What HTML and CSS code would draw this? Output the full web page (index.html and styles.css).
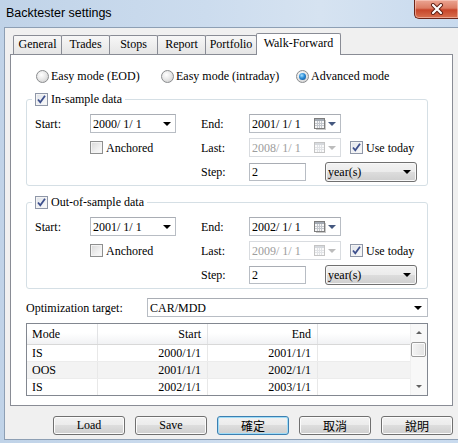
FILE: index.html
```html
<!DOCTYPE html>
<html lang="en">
<head>
    <meta charset="UTF-8">
    <title>Backtester settings</title>
    <link rel="stylesheet" href="styles.css">
</head>
<body>
<div class="window">

    <!-- Title bar -->
    <div class="titlebar">
        <span class="title">Backtester settings</span>
        <div class="close-btn">
            <svg width="16" height="12" viewBox="0 0 16 12">
                <path d="M4 2 L12 10 M12 2 L4 10" stroke="#5e1d12" stroke-width="4" stroke-linecap="round"/>
                <path d="M4 2 L12 10 M12 2 L4 10" stroke="#fff" stroke-width="2.2" stroke-linecap="round"/>
            </svg>
        </div>
    </div>

    <div class="client">
        <!-- Tabs -->
        <div class="tabs">
            <div class="tab w49">General</div>
            <div class="tab w49">Trades</div>
            <div class="tab w49">Stops</div>
            <div class="tab w49">Report</div>
            <div class="tab w52">Portfolio</div>
            <div class="tab active">Walk-Forward</div>
        </div>

        <div class="pane">
            <div class="modes">
                <label class="opt"><span class="radio"></span>Easy mode (EOD)</label>
                <label class="opt"><span class="radio"></span>Easy mode (intraday)</label>
                <label class="opt"><span class="radio on"></span>Advanced mode</label>
            </div>

            <!-- In-sample -->
            <fieldset class="group">
                <legend><span class="check on"><svg width="11" height="11" viewBox="0 0 11 11"><path d="M2 5.5 L4.3 8.3 L9 1.8" fill="none" stroke="#3d4f8c" stroke-width="1.8"/></svg></span>In-sample data</legend>
                <div class="fields">
                    <span>Start:</span>
                    <div class="combo"><span>2000/ 1/ 1</span><span class="tri"></span></div>
                    <span class="c4">End:</span>
                    <div class="picker"><span class="val">2001/ 1/ 1</span><svg class="cal" width="12" height="12" viewBox="0 0 12 12"><rect x="0.5" y="0.5" width="10" height="10" fill="#f6f6f6" stroke="#7d7d7d"/><rect x="1" y="1" width="9" height="2" fill="#a3aab3"/><path d="M1 5.5h9M1 7.5h9M3.5 3v7M5.5 3v7M7.5 3v7" stroke="#c3c7cd"/><path d="M11.5 2v10M2 11.5h10" stroke="#c9c9c9"/></svg><span class="tri blue"></span></div>

                    <label class="opt c2 gap3"><span class="check"></span>Anchored</label>
                    <span class="c4">Last:</span>
                    <div class="line">
                        <div class="picker off"><span class="val">2008/ 1/ 1</span><svg class="cal" width="12" height="12" viewBox="0 0 12 12"><rect x="0.5" y="0.5" width="10" height="10" fill="#fafafa" stroke="#c4c4c4"/><rect x="1" y="1" width="9" height="2" fill="#d6d9dd"/><path d="M1 5.5h9M1 7.5h9M3.5 3v7M5.5 3v7M7.5 3v7" stroke="#e1e3e6"/></svg><span class="tri grey"></span></div>
                        <label class="opt gap3 today"><span class="check on"><svg width="11" height="11" viewBox="0 0 11 11"><path d="M2 5.5 L4.3 8.3 L9 1.8" fill="none" stroke="#3d4f8c" stroke-width="1.8"/></svg></span>Use today</label>
                    </div>

                    <span class="c4">Step:</span>
                    <div class="line">
                        <div class="input">2</div>
                        <div class="select"><span>year(s)</span><span class="tri"></span></div>
                    </div>
                </div>
            </fieldset>

            <!-- Out-of-sample -->
            <fieldset class="group">
                <legend><span class="check on"><svg width="11" height="11" viewBox="0 0 11 11"><path d="M2 5.5 L4.3 8.3 L9 1.8" fill="none" stroke="#3d4f8c" stroke-width="1.8"/></svg></span>Out-of-sample data</legend>
                <div class="fields">
                    <span>Start:</span>
                    <div class="combo"><span>2001/ 1/ 1</span><span class="tri"></span></div>
                    <span class="c4">End:</span>
                    <div class="picker"><span class="val">2002/ 1/ 1</span><svg class="cal" width="12" height="12" viewBox="0 0 12 12"><rect x="0.5" y="0.5" width="10" height="10" fill="#f6f6f6" stroke="#7d7d7d"/><rect x="1" y="1" width="9" height="2" fill="#a3aab3"/><path d="M1 5.5h9M1 7.5h9M3.5 3v7M5.5 3v7M7.5 3v7" stroke="#c3c7cd"/><path d="M11.5 2v10M2 11.5h10" stroke="#c9c9c9"/></svg><span class="tri blue"></span></div>

                    <label class="opt c2 gap3"><span class="check"></span>Anchored</label>
                    <span class="c4">Last:</span>
                    <div class="line">
                        <div class="picker off"><span class="val">2009/ 1/ 1</span><svg class="cal" width="12" height="12" viewBox="0 0 12 12"><rect x="0.5" y="0.5" width="10" height="10" fill="#fafafa" stroke="#c4c4c4"/><rect x="1" y="1" width="9" height="2" fill="#d6d9dd"/><path d="M1 5.5h9M1 7.5h9M3.5 3v7M5.5 3v7M7.5 3v7" stroke="#e1e3e6"/></svg><span class="tri grey"></span></div>
                        <label class="opt gap3 today"><span class="check on"><svg width="11" height="11" viewBox="0 0 11 11"><path d="M2 5.5 L4.3 8.3 L9 1.8" fill="none" stroke="#3d4f8c" stroke-width="1.8"/></svg></span>Use today</label>
                    </div>

                    <span class="c4">Step:</span>
                    <div class="line">
                        <div class="input">2</div>
                        <div class="select"><span>year(s)</span><span class="tri"></span></div>
                    </div>
                </div>
            </fieldset>

            <!-- Optimization target -->
            <div class="target">
                <span class="target-label">Optimization target:</span>
                <div class="combo wide"><span>CAR/MDD</span><span class="tri"></span></div>
            </div>

            <!-- Walk-forward periods -->
            <div class="table">
                <div class="list">
                    <div class="row head">
                        <span>Mode</span><span class="num">Start</span><span class="num">End</span><span></span>
                    </div>
                    <div class="row">
                        <span>IS</span><span class="num">2000/1/1</span><span class="num">2001/1/1</span><span></span>
                    </div>
                    <div class="row alt">
                        <span>OOS</span><span class="num">2001/1/1</span><span class="num">2002/1/1</span><span></span>
                    </div>
                    <div class="row">
                        <span>IS</span><span class="num">2002/1/1</span><span class="num">2003/1/1</span><span></span>
                    </div>
                </div>
                <div class="scroll">
                    <div class="sbtn"><span class="tri up"></span></div>
                    <div class="thumb"></div>
                    <div class="track"></div>
                    <div class="sbtn"><span class="tri small"></span></div>
                </div>
            </div>
        </div>

        <!-- Dialog buttons -->
        <div class="actions">
            <div class="btn">Load</div>
            <div class="btn">Save</div>
            <div class="btn cjk focus">確定</div>
            <div class="btn cjk">取消</div>
            <div class="btn cjk">說明</div>
        </div>
    </div>
</div>
</body>
</html>
```

FILE: styles.css
```css
* {
    box-sizing: border-box;
}

body {
    margin: 0;
    font-family: "Liberation Serif", "Times New Roman", "DejaVu Serif", serif;
    font-size: 12px;
    line-height: 14px;
    color: #000;
}

.window {
    width: 458px;
    height: 443px;
    display: flex;
    flex-direction: column;
    overflow: hidden;
    background: linear-gradient(90deg, #c0d3e8 0%, #ccdcee 45%, #d6e3f1 70%, #c8daee 100%);
}

/* Title bar */
.titlebar {
    height: 27px;
    flex-shrink: 0;
    display: flex;
    justify-content: space-between;
    align-items: flex-start;
}

.title {
    font-family: "Liberation Sans", Arial, sans-serif;
    font-size: 12.5px;
    padding: 6px 0 0 6px;
}

.close-btn {
    width: 44px;
    height: 19px;
    border: 1px solid #6b2418;
    border-top: none;
    border-right: none;
    border-radius: 0 0 0 5px;
    background: linear-gradient(#eba593 0%, #dc7c63 45%, #c7452a 55%, #d8704f 100%);
    box-shadow: inset 0 0 0 1px rgba(255, 220, 210, 0.5);
    display: flex;
    align-items: center;
    justify-content: center;
}

/* Client area */
.client {
    flex: 1;
    margin: 0 0 3px 4px;
    border: 1px solid #8d9fb4;
    border-right: none;
    background: #f0f0f0;
    padding: 5px 0 0 5px;
}

.tabs {
    display: flex;
    align-items: flex-end;
    height: 21px;
    padding-left: 3px;
}

.tab {
    height: 19px;
    margin-right: -1px;
    border: 1px solid #898c95;
    border-bottom: none;
    border-radius: 2px 2px 0 0;
    background: linear-gradient(#f7f7f7, #e5e5e5);
    text-align: center;
    line-height: 17px;
}

.w49 { width: 49px; }
.w52 { width: 52px; }

.tab.active {
    width: 85px;
    height: 22px;
    margin-bottom: -1px;
    background: #fff;
    line-height: 18px;
    position: relative;
    z-index: 1;
}

.pane {
    width: 443px;
    height: 352px;
    border: 1px solid #898c95;
    background: #fff;
    padding: 14px 0 0 15px;
}

/* Radio / checkbox */
.modes {
    display: grid;
    grid-template-columns: 125px 135px auto;
    padding-left: 10px;
    height: 14px;
}

.opt {
    display: flex;
    align-items: center;
    gap: 2px;
    white-space: nowrap;
}

.gap3 { gap: 3px; }

.radio {
    width: 13px;
    height: 13px;
    border: 1px solid #8a8c8e;
    border-radius: 50%;
    background: radial-gradient(circle at 40% 35%, #ffffff 0%, #e9e9e9 45%, #c9c9c9 100%);
    display: flex;
    align-items: center;
    justify-content: center;
}

.radio.on::after {
    content: "";
    width: 7px;
    height: 7px;
    border-radius: 50%;
    background: radial-gradient(circle at 40% 35%, #a5e0ff 0%, #2a8bd6 45%, #0c4585 100%);
}

.check {
    width: 13px;
    height: 13px;
    flex-shrink: 0;
    border: 1px solid #8e8f8f;
    background: linear-gradient(135deg, #d8d8d8 0%, #f0f0f0 60%, #fbfbfb 100%);
    box-shadow: inset 0 0 0 1px #f4f4f4;
    display: flex;
    align-items: center;
    justify-content: center;
}

.check.on {
    border-color: #8f97a8;
    background: linear-gradient(135deg, #dfe3ea, #fbfbfb);
}

/* Group boxes */
.group {
    width: 402px;
    margin: 9px 0 0;
    padding: 8px 0 4px 8px;
    border: 1px solid #d5dfe5;
    border-radius: 3px;
    min-width: 0;
}

.group legend {
    display: flex;
    align-items: center;
    gap: 3px;
    height: 14px;
    padding: 0 3px;
    margin-left: -3px;
}

.fields {
    display: grid;
    grid-template-columns: 55px 86px 25px 48px auto;
    grid-auto-rows: 19px;
    row-gap: 5px;
    align-items: center;
}

.c2 { grid-column: 2; }
.c4 { grid-column: 4; }

.line {
    display: flex;
    align-items: center;
}

.combo,
.picker,
.input {
    height: 19px;
    border: 1px solid #b8bdc4;
    border-top-color: #a9adb4;
    background: #fff;
    display: flex;
    align-items: center;
    white-space: pre;
}

.combo {
    width: 86px;
    justify-content: space-between;
    padding: 0 4px 0 2px;
}

.combo.wide {
    width: 281px;
    padding-right: 5px;
}

.picker {
    width: 92px;
    padding: 0 4px 0 2px;
}

.picker .val {
    flex: 1;
}

.picker .cal {
    margin-right: 2px;
}

.picker.off {
    color: #9d9d9d;
    border-color: #d9dce0;
}

.today {
    margin-left: 9px;
}

.input {
    width: 57px;
    height: 18px;
    padding-left: 2px;
    margin-right: 19px;
}

.select {
    width: 92px;
    height: 20px;
    border: 1px solid #707070;
    border-radius: 3px;
    background: linear-gradient(#f2f2f2 0%, #ebebeb 50%, #dddddd 50%, #cfcfcf 100%);
    box-shadow: inset 0 0 0 1px #f8f8f8;
    display: flex;
    align-items: center;
    justify-content: space-between;
    padding: 0 5px 0 2px;
}

.tri {
    width: 0;
    height: 0;
    border-left: 4px solid transparent;
    border-right: 4px solid transparent;
    border-top: 4px solid #000;
}

.tri.blue { border-top-color: #44587f; }
.tri.grey { border-top-color: #bcbcbc; }

.tri.small {
    border-left-width: 3px;
    border-right-width: 3px;
    border-top: 3px solid #606060;
}

.tri.up {
    border-left-width: 3px;
    border-right-width: 3px;
    border-top: none;
    border-bottom: 3px solid #606060;
}

/* Optimization target */
.target {
    display: flex;
    align-items: center;
    height: 19px;
    margin-top: 9px;
}

.target-label {
    width: 121px;
}

/* Period table */
.table {
    width: 402px;
    height: 73px;
    margin-top: 6px;
    border: 1px solid #828790;
    display: flex;
    overflow: hidden;
}

.list {
    flex: 1;
}

.row {
    display: grid;
    grid-template-columns: 71px 110px 110px 1fr;
    height: 17px;
    border-bottom: 1px solid #ececec;
}

.row span {
    padding: 0 6px 0 5px;
    border-right: 1px solid #e8e8e8;
    line-height: 16px;
}

.row span:last-child {
    border-right: none;
}

.row .num {
    text-align: right;
}

.row.head {
    height: 21px;
    border-bottom: 1px solid #d8d8d8;
    background: linear-gradient(#ffffff 0%, #ffffff 45%, #f1f2f4 100%);
}

.row.head span {
    line-height: 20px;
    border-right-color: #e2e3e5;
}

.row.head span:last-child {
    border-right: none;
}

.row.alt {
    background: #f3f3f3;
}

.scroll {
    width: 17px;
    display: flex;
    flex-direction: column;
    background: #f8f8f8;
    border-left: 1px solid #f0f0f0;
}

.sbtn {
    height: 17px;
    flex-shrink: 0;
    display: flex;
    align-items: center;
    justify-content: center;
}

.thumb {
    height: 15px;
    flex-shrink: 0;
    margin: 1px 1px 0 0;
    border: 1px solid #9a9a9a;
    border-radius: 2px;
    background: linear-gradient(90deg, #f4f4f4, #e2e2e2);
    box-shadow: inset 0 0 0 1px #fbfbfb;
}

.track {
    flex: 1;
}

/* Dialog buttons */
.actions {
    display: flex;
    justify-content: flex-end;
    gap: 10px;
    margin-top: 10px;
    padding-right: 5px;
}

.btn {
    width: 72px;
    height: 19px;
    border: 1px solid #707070;
    border-radius: 3px;
    background: linear-gradient(#f2f2f2 0%, #ebebeb 50%, #dddddd 50%, #cfcfcf 100%);
    box-shadow: inset 0 0 0 1px #fcfcfc;
    text-align: center;
    line-height: 17px;
}

.btn.cjk {
    font-family: "Noto Sans CJK TC", sans-serif;
    font-size: 12px;
}

.btn.focus {
    border-color: #3c7fb1;
    box-shadow: inset 0 0 0 1px #9fdcf7;
}
```
